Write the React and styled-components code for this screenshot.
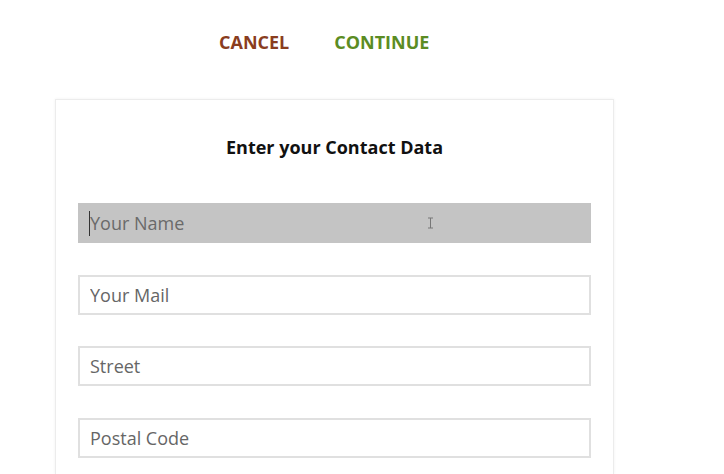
import React from "react";
import styled, { createGlobalStyle } from "styled-components";

const GlobalStyle = createGlobalStyle`
    body {
        margin: 0;
        background: #fff;
        font-family: "Open Sans", "Liberation Sans", sans-serif;
    }
`;

const fields = ["Your Name", "Your Mail", "Street", "Postal Code"];

function App() {
    return (
        <Page>
            <GlobalStyle />
            <ButtonBar>
                <ActionButton color="#8a3d1e">Cancel</ActionButton>
                <ActionButton color="#5b8c23">Continue</ActionButton>
            </ButtonBar>
            <Card>
                <Title>Enter your Contact Data</Title>
                <Form>
                    {fields.map((label, i) => (
                        <Field key={label}>
                            <Input placeholder={label} active={i === 0} readOnly />
                            {i === 0 && <Caret />}
                            {i === 0 && (
                                <IBeam width="7" height="12" viewBox="0 0 7 12">
                                    <path
                                        d="M1 1h5M3.5 1v10M1 11h5"
                                        stroke="#777"
                                        strokeWidth="1"
                                        fill="none"
                                    />
                                </IBeam>
                            )}
                        </Field>
                    ))}
                </Form>
            </Card>
        </Page>
    );
}

export default App;

const Page = styled.div`
    width: 724px;
    height: 474px;
    overflow: hidden;
    display: flex;
    flex-direction: column;
`;

const ButtonBar = styled.div`
    display: flex;
    align-items: center;
    gap: 45px;
    padding: 30px 0 0 219px;
    height: 24px;
`;

const ActionButton = styled.div`
    color: ${(props) => props.color};
    font-weight: 700;
    font-size: 18px;
    line-height: 24px;
    text-transform: uppercase;
    cursor: pointer;
`;

const Card = styled.div`
    margin: 45px 0 0 55px;
    width: 559px;
    flex: 1;
    border: 1px solid #ececec;
    border-bottom: none;
    box-shadow: 0 0 3px rgba(0, 0, 0, 0.06);
    padding: 36px 22px 0;
    box-sizing: border-box;
`;

const Title = styled.h2`
    margin: 0;
    text-align: center;
    font-size: 18px;
    line-height: 22px;
    font-weight: 700;
    color: #111;
`;

const Form = styled.div`
    margin-top: 45px;
    display: flex;
    flex-direction: column;
    gap: 31.5px;
`;

const Field = styled.div`
    position: relative;
`;

const Input = styled.input`
    display: block;
    width: 100%;
    height: 40px;
    box-sizing: border-box;
    border: 2px solid ${(props) => (props.active ? "#c4c4c4" : "#e0e0e0")};
    background: ${(props) => (props.active ? "#c4c4c4" : "#fff")};
    padding: 0 10px;
    font-family: "Open Sans", "Liberation Sans", sans-serif;
    font-size: 18px;
    color: #555;
    outline: none;

    &::placeholder {
        color: ${(props) => (props.active ? "#6a6a6a" : "#666")};
    }
`;

const Caret = styled.span`
    position: absolute;
    left: 11px;
    top: 8px;
    width: 1px;
    height: 25px;
    background: #333;
`;

const IBeam = styled.svg`
    position: absolute;
    left: 349px;
    top: 14px;
`;
